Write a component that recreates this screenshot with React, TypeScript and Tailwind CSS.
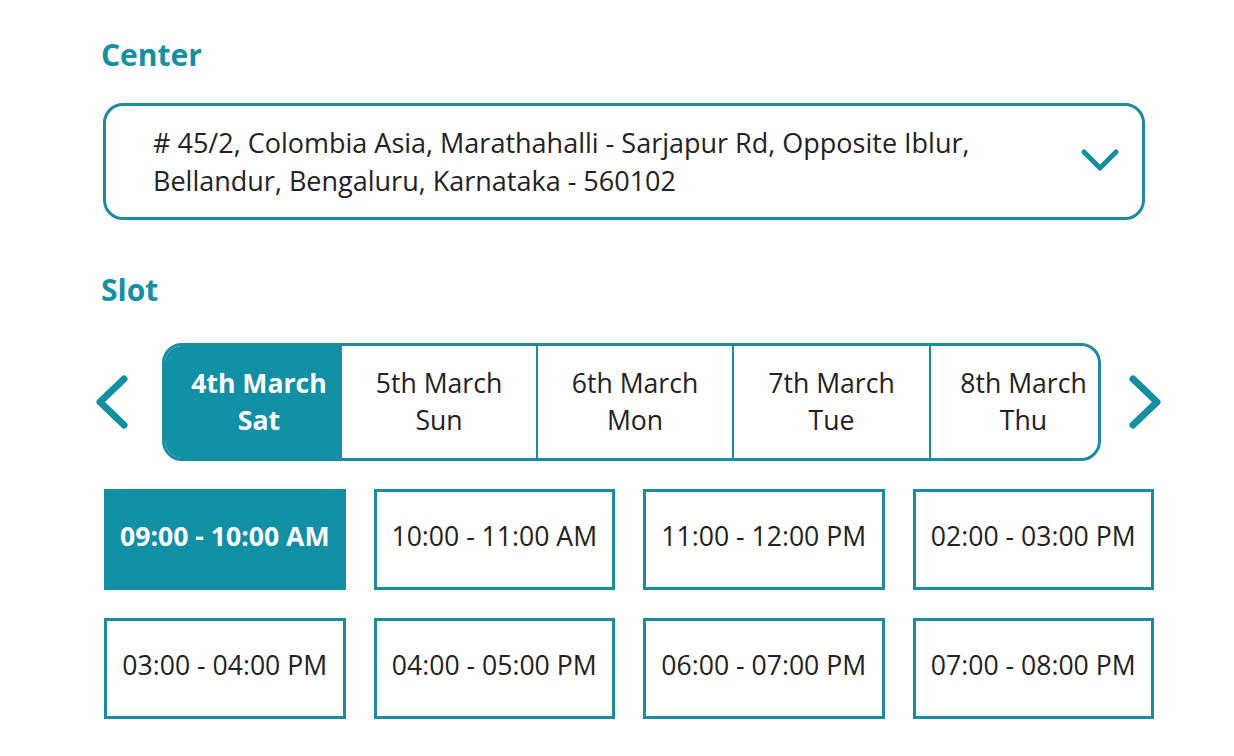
const dates = [
  { day: "4th March", week: "Sat", w: "w-[175px]", pad: "pl-[13px]" },
  { day: "5th March", week: "Sun", w: "w-[196px]", pad: "" },
  { day: "6th March", week: "Mon", w: "w-[196px]", pad: "" },
  { day: "7th March", week: "Tue", w: "w-[197px]", pad: "" },
  { day: "8th March", week: "Thu", w: "w-[169px]", pad: "pl-[18px]" },
];

const slots = [
  "09:00 - 10:00 AM",
  "10:00 - 11:00 AM",
  "11:00 - 12:00 PM",
  "02:00 - 03:00 PM",
  "03:00 - 04:00 PM",
  "04:00 - 05:00 PM",
  "06:00 - 07:00 PM",
  "07:00 - 08:00 PM",
];

const Arrow = ({ dir }: { dir: "left" | "right" }) => (
  <svg width="34" height="54" viewBox="0 0 34 54" className="shrink-0">
    <polyline
      points={dir === "left" ? "29,4 5,27 29,50" : "5,4 29,27 5,50"}
      fill="none"
      stroke="#148ea2"
      strokeWidth="7"
      strokeLinecap="round"
      strokeLinejoin="round"
    />
  </svg>
);

const App = () => {
  return (
    <div className="min-h-screen bg-white pl-[103px] pt-[35px] font-['Open_Sans',sans-serif] text-[#222]">
      {/* center */}
      <h2 className="-ml-[2px] text-[30px] font-bold leading-[40px] text-[#148fa3]">Center</h2>
      <div className="mt-[28px] flex h-[117px] w-[1042px] items-center justify-between rounded-[20px] border-[3px] border-[#1b8b9d] pl-[47px] pr-[22px]">
        <p className="text-[27px] leading-[38px]">
          # 45/2, Colombia Asia, Marathahalli - Sarjapur Rd, Opposite Iblur,
          <br />
          Bellandur, Bengaluru, Karnataka - 560102
        </p>
        <svg width="40" height="28" viewBox="0 0 40 28" className="mt-[-2px] shrink-0">
          <polyline
            points="4,5 20,21 36,5"
            fill="none"
            stroke="#148ea2"
            strokeWidth="5"
            strokeLinecap="round"
            strokeLinejoin="round"
          />
        </svg>
      </div>

      {/* slot */}
      <h2 className="-ml-[2px] mt-[50px] text-[30px] font-bold leading-[40px] text-[#148fa3]">Slot</h2>
      <div className="-ml-[8px] mt-[33px] flex items-center">
        <Arrow dir="left" />
        <div className="ml-[33px] flex h-[118px] overflow-hidden rounded-[20px] border-[3px] border-[#1b8b9d]">
          {dates.map((d, i) => (
            <div
              key={d.day}
              className={`flex flex-col items-center justify-center text-[26.6px] leading-[37px] ${d.w} ${d.pad} ${
                i === 0 ? "bg-[#1190a5] font-bold text-white" : "border-l-[2px] border-[#1b8b9d]"
              }`}
            >
              <span>{d.day}</span>
              <span>{d.week}</span>
            </div>
          ))}
        </div>
        <div className="ml-[27px]">
          <Arrow dir="right" />
        </div>
      </div>

      <div className="ml-[1px] mt-[28px] grid w-[1050px] grid-cols-4 gap-[28px]">
        {slots.map((s, i) => (
          <div
            key={s}
            className={`flex h-[101px] items-center justify-center pb-[5px] text-[26.6px] ${
              i === 0 ? "bg-[#1190a5] font-bold text-white" : "border-[3px] border-[#1b8b9d]"
            }`}
          >
            {s}
          </div>
        ))}
      </div>
    </div>
  );
};

export default App;
